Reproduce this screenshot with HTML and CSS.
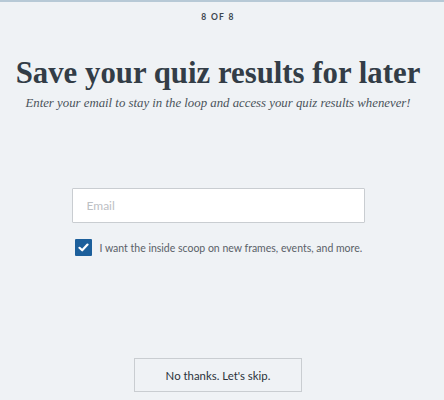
FILE: index.html
```html
<!DOCTYPE html>
<html lang="en">
<head>
    <meta charset="UTF-8">
    <meta name="viewport" content="width=device-width, initial-scale=1.0">
    <title>Save your quiz results</title>
    <link rel="stylesheet" href="styles.css">
</head>
<body>

    <div class="quiz">
        <div class="step">8 of 8</div>

        <h1>Save your quiz results for later</h1>
        <p class="lead">Enter your email to stay in the loop and access your quiz results whenever!</p>

        <form class="signup">
            <input type="email" class="email" placeholder="Email">

            <label class="optin">
                <span class="check">
                    <svg width="11" height="9" viewBox="0 0 11 9"><path d="M1.5 4.8 L4.2 7.3 L9.5 1.6" fill="none" stroke="#fff" stroke-width="2.2" stroke-linecap="round" stroke-linejoin="round"/></svg>
                </span>
                I want the inside scoop on new frames, events, and more.
            </label>
        </form>

        <button type="button" class="skip">No thanks. Let's skip.</button>
    </div>

</body>
</html>
```

FILE: styles.css
```css
body {
    margin: 0;
    padding: 0;
    background-color: #eff2f5;
    font-family: Lato, 'Liberation Sans', Arial, sans-serif;
    color: #333d47;
}

.quiz {
    border-top: 2px solid #b7c9d6;
    height: 400px;
    box-sizing: border-box;
    padding-right: 8px;
    display: flex;
    flex-direction: column;
    align-items: center;
}

.step {
    margin-top: 10px;
    font-size: 8.5px;
    line-height: 10px;
    font-weight: bold;
    letter-spacing: 1.3px;
    text-transform: uppercase;
    color: #3c4650;
}

h1 {
    margin: 33px 0 0;
    font-family: 'Liberation Serif', serif;
    font-size: 30.8px;
    font-weight: bold;
    line-height: 36px;
    color: #333d47;
    white-space: nowrap;
}

.lead {
    margin: 4px 0 0;
    font-family: 'Liberation Serif', serif;
    font-style: italic;
    font-size: 12.8px;
    line-height: 16px;
    color: #4a525a;
    white-space: nowrap;
}

.signup {
    margin-top: 77px;
    width: 293px;
}

.email {
    display: block;
    width: 100%;
    height: 35px;
    box-sizing: border-box;
    padding: 0 14px;
    border: 1px solid #c9cdd1;
    border-radius: 1px;
    background-color: #fff;
    font-family: Lato, 'Liberation Sans', Arial, sans-serif;
    font-size: 12px;
}

.email::placeholder {
    color: #bcc0c4;
}

.optin {
    display: flex;
    align-items: center;
    gap: 8px;
    margin-top: 16px;
    margin-left: 3px;
    font-size: 10.5px;
    color: #5a6168;
    white-space: nowrap;
}

.check {
    width: 17px;
    height: 17px;
    flex: none;
    display: flex;
    align-items: center;
    justify-content: center;
    background-color: #1c5f9b;
    border-radius: 1px;
}

.skip {
    margin-top: auto;
    margin-bottom: 8px;
    width: 168px;
    height: 34px;
    border: 1px solid #c9cdd1;
    background-color: transparent;
    font-family: Lato, 'Liberation Sans', Arial, sans-serif;
    font-size: 11.4px;
    color: #2b333b;
    cursor: pointer;
}
```
